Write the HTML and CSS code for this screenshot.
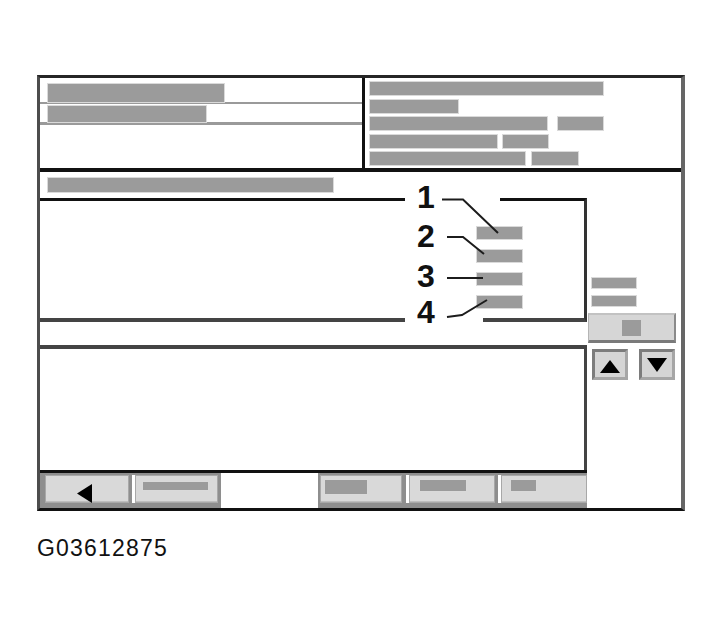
FILE: index.html
```html
<!DOCTYPE html>
<html>
<head>
<meta charset="utf-8">
<title>Screen layout G03612875</title>
<link rel="stylesheet" href="styles.css">
</head>
<body>
<div class="page">
  <div class="frame">
    <div class="top">
      <div class="tl">
        <div class="tl-row1"><div class="bar w176"></div></div>
        <div class="tl-row2"><div class="bar w158"></div></div>
      </div>
      <div class="tr">
        <div class="trow"><div class="bar w233"></div></div>
        <div class="trow"><div class="bar w88"></div></div>
        <div class="trow g11"><div class="bar w177"></div><div class="bar w45"></div></div>
        <div class="trow g6"><div class="bar w127"></div><div class="bar w45"></div></div>
        <div class="trow g7"><div class="bar w155"></div><div class="bar w46"></div></div>
      </div>
    </div>
    <div class="mid">
      <div class="lcol">
        <div class="title-row"><div class="bar w285 h14"></div></div>
        <div class="box">
          <div class="bar cbar"></div>
          <div class="bar cbar"></div>
          <div class="bar cbar"></div>
          <div class="bar cbar"></div>
        </div>
        <div class="strip"></div>
        <div class="lower"></div>
        <div class="toolbar">
          <div class="tbtn b1">
            <svg class="tri-left" width="16" height="19" viewBox="0 0 16 19"><polygon points="0,9.5 15,0 15,19" fill="#000"/></svg>
          </div>
          <div class="tbtn b2 sep"><div class="bar tb-bar2"></div></div>
          <div class="tb-blank"></div>
          <div class="tbtn b3"><div class="bar tb-bar3"></div></div>
          <div class="tbtn b4 sep"><div class="bar tb-bar4"></div></div>
          <div class="tbtn b5 sep"><div class="bar tb-bar5"></div></div>
        </div>
        <svg class="callouts" width="130" height="150" viewBox="400 180 130 150">
          <rect x="405" y="196" width="95" height="7" fill="#fff"/>
          <rect x="405" y="315" width="78" height="9" fill="#fff"/>
          <g fill="none" stroke="#1c1c1c" stroke-width="2">
            <polyline points="442,199.5 463,199.5 498,233"/>
            <polyline points="447,237 463,237 484,254"/>
            <line x1="447" y1="278" x2="483" y2="278"/>
            <polyline points="447,317 462,315 487,300"/>
          </g>
          <g class="num">
            <text x="426" y="208">1</text>
            <text x="426" y="247">2</text>
            <text x="426" y="287">3</text>
            <text x="426" y="323">4</text>
          </g>
        </svg>
      </div>
      <div class="rcol">
        <div class="bar sbar"></div>
        <div class="bar sbar s2"></div>
        <div class="wbtn"><div class="wsq"></div></div>
        <div class="arrows">
          <div class="abtn up"><svg width="20" height="13" viewBox="0 0 20 13"><polygon points="10,0 20,13 0,13" fill="#000"/></svg></div>
          <div class="abtn down"><svg width="20" height="14" viewBox="0 0 20 14"><polygon points="0,0 20,0 10,14" fill="#000"/></svg></div>
        </div>
      </div>
    </div>
  </div>
  <div class="caption">G03612875</div>
</div>
</body>
</html>
```
FILE: styles.css
```css
* { box-sizing: border-box; }
html, body { margin: 0; padding: 0; background: #fff; }
body { font-family: "Liberation Sans", Arial, sans-serif; }

.page { width: 725px; height: 631px; padding: 75px 0 0 37px; }

.frame {
  width: 648px;
  height: 436px;
  border-left: 3px solid #4d4d4d;
  border-top: 3px solid #262626;
  border-right: 4px solid #666;
  border-bottom: 3px solid #111;
  display: flex;
  flex-direction: column;
}

.bar { background: #9b9b9b; box-shadow: 0 0 0 1px #dadada; height: 100%; }
.w176 { width: 176px; }
.w158 { width: 158px; }
.w233 { width: 233px; }
.w88 { width: 88px; }
.w177 { width: 177px; }
.w45 { width: 45px; }
.w127 { width: 127px; }
.w155 { width: 155px; }
.w46 { width: 46px; }
.w285 { width: 285px; }
.h14 { height: 14px; }

/* top section */
.top { height: 94px; border-bottom: 4px solid #111; display: flex; }
.tl { width: 325px; border-right: 3px solid #111; }
.tl-row1 { height: 26px; padding: 6px 0 0 8px; border-bottom: 2px solid #9a9a9a; }
.tl-row2 { height: 21px; padding: 2px 0 0 8px; border-bottom: 3px solid #9a9a9a; }
.tr { flex: 1; padding: 4px 0 0 5px; display: flex; flex-direction: column; gap: 4.5px; }
.trow { height: 13px; display: flex; }
.g11 { gap: 11px; }
.g6 { gap: 6px; }
.g7 { gap: 7px; }

/* middle section */
.mid { flex: 1; display: flex; }
.lcol { width: 547px; display: flex; flex-direction: column; position: relative; }
.title-row { height: 26px; padding: 6px 0 0 8px; }
.box {
  height: 124px;
  border-top: 3px solid #111;
  border-right: 3px solid #333;
  border-bottom: 4px solid #444;
  padding: 26px 0 0 437px;
  display: flex;
  flex-direction: column;
  gap: 11px;
}
.cbar { width: 45px; height: 12px; flex: none; }
.strip { height: 23px; }
.lower { height: 125px; border-top: 4px solid #444; border-right: 3px solid #444; }

.toolbar {
  height: 38px;
  border-top: 3px solid #111;
  background: #8e8e8e;
  display: flex;
  align-items: flex-start;
  padding-left: 5px;
}
.tbtn {
  margin-top: 2px;
  height: 28px;
  background: #d9d9d9;
  box-shadow: inset 0 0 0 1px #a8a8a8, inset 0 -2px 0 #bdbdbd;
  flex: none;
}
.tbtn.sep { border-left: 3px solid #fff; }
.b1 { width: 84px; display: flex; justify-content: center; padding: 9px 4px 0 0; }
.b2 { margin-left: 3px; width: 86px; padding: 7px 0 0 8px; }
.tb-blank { margin-left: 3px; width: 97px; height: 35px; background: #fff; flex: none; }
.b3 { margin-left: 2px; width: 82px; padding: 5px 0 0 5px; }
.b4 { margin-left: 4px; width: 89px; padding: 5px 0 0 11px; }
.b5 { margin-left: 3px; width: 89px; padding: 5px 0 0 10px; }
.tb-bar2 { width: 65px; height: 8px; }
.tb-bar3 { width: 42px; height: 14px; }
.tb-bar4 { width: 46px; height: 11px; }
.tb-bar5 { width: 25px; height: 11px; }

.callouts { position: absolute; left: 360px; top: 8px; overflow: visible; }
.num text {
  font-family: "Liberation Sans", Arial, sans-serif;
  font-weight: bold;
  font-size: 32px;
  text-anchor: middle;
  fill: #111;
}

/* right column */
.rcol { width: 94px; padding-top: 106px; display: flex; flex-direction: column; }
.sbar { width: 44px; height: 10px; margin-left: 5px; flex: none; }
.sbar.s2 { margin-top: 8px; }
.wbtn {
  margin: 7px 0 0 1px;
  width: 88px;
  height: 30px;
  background: #d6d6d6;
  border-top: 2px solid #c2c2c2;
  border-left: 1px solid #b5b5b5;
  border-right: 2px solid #8a8a8a;
  border-bottom: 3px solid #7a7a7a;
  display: flex;
  align-items: center;
  justify-content: center;
}
.wsq { width: 19px; height: 16px; background: #9b9b9b; }
.arrows { margin: 6px 0 0 5px; display: flex; gap: 11px; }
.abtn {
  width: 36px;
  height: 31px;
  border: 3px solid;
  border-color: #7c7c7c #a6a6a6 #a6a6a6 #7c7c7c;
  background: #d5d5d5;
  display: flex;
  align-items: center;
  justify-content: center;
}
.abtn.up { padding-top: 4px; }
.abtn svg { display: block; }

.caption {
  margin-top: 26px;
  font-size: 23px;
  line-height: 23px;
  letter-spacing: 1.2px;
  color: #111;
}
```
